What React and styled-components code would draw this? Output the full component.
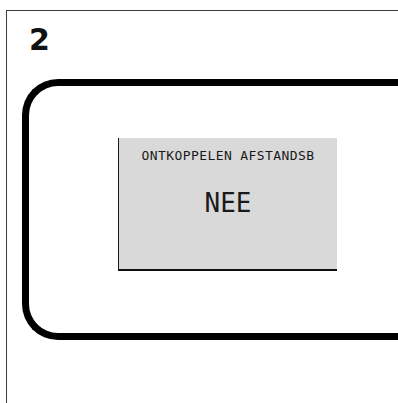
import React from "react";
import styled, { createGlobalStyle } from "styled-components";

const GlobalStyle = createGlobalStyle`
    html, body {
        margin: 0;
        padding: 0;
        background: #ffffff;
        overflow: hidden;
    }
    body {
        font-family: "DejaVu Sans", sans-serif;
    }
`;

const Frame = styled.div`
    margin: 10px 0 0 6px;
    height: 393px;
    border-top: 1px solid #3c3c3c;
    border-left: 1px solid #3c3c3c;
    box-sizing: border-box;
`;

const Heading = styled.div`
    height: 68px;
    padding: 11px 0 0 22px;
    box-sizing: border-box;
    font-family: "DejaVu Sans", sans-serif;
    font-weight: bold;
    font-size: 30px;
    line-height: 35px;
    color: #111;
`;

const Screen = styled.div`
    margin-left: 15px;
    height: 261px;
    border: 7px solid #000;
    border-right: none;
    border-radius: 36px 0 0 36px;
    box-sizing: border-box;
    padding: 52px 0 0 89px;
`;

const Dialog = styled.div`
    width: 219px;
    height: 133px;
    background: #d9d9d9;
    border-left: 1px solid #1a1a1a;
    border-bottom: 2px solid #111;
    box-sizing: border-box;
    display: flex;
    flex-direction: column;
    align-items: center;
    font-family: "DejaVu Sans Mono", monospace;
    color: #1a1a1a;
`;

const Label = styled.div`
    margin-top: 10px;
    font-size: 13px;
    letter-spacing: 0.4px;
    line-height: 16px;
`;

const Value = styled.div`
    margin-top: 24px;
    font-size: 26px;
    line-height: 30px;
`;

export default function App() {
    return (
        <>
            <GlobalStyle />
            <Frame>
                <Heading>2</Heading>
                <Screen>
                    <Dialog>
                        <Label>ONTKOPPELEN AFSTANDSB</Label>
                        <Value>NEE</Value>
                    </Dialog>
                </Screen>
            </Frame>
        </>
    );
}
